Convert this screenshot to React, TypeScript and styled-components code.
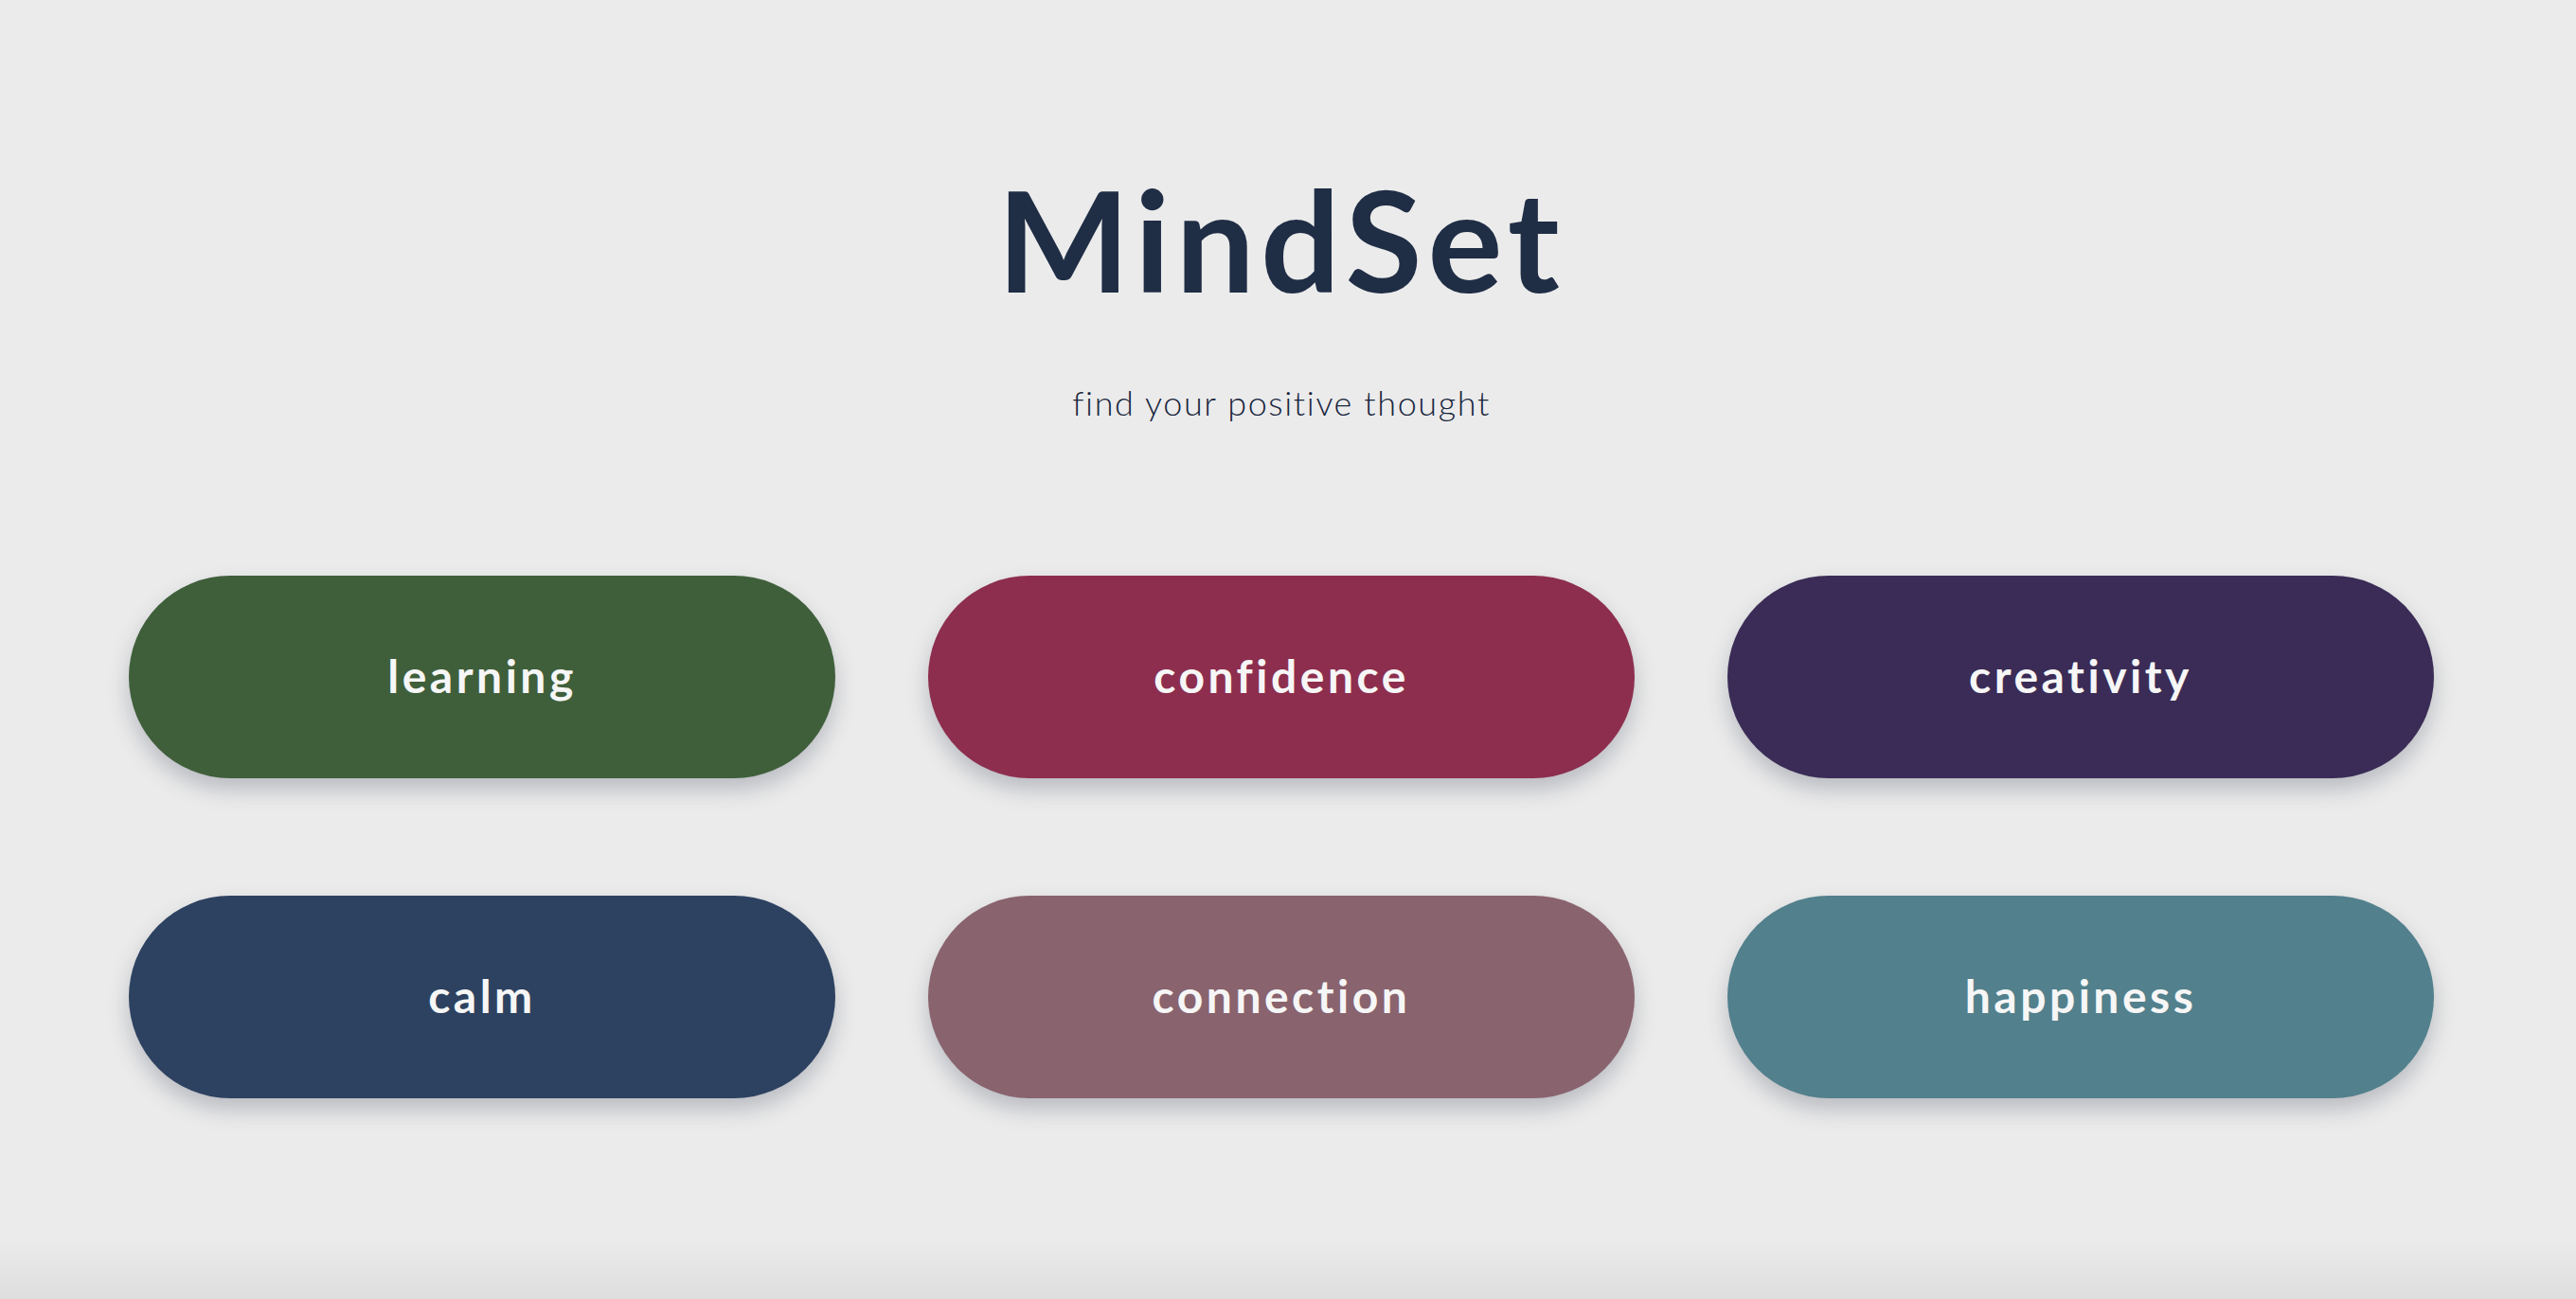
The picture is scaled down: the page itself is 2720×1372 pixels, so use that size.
import React from "react";
import styled, { createGlobalStyle } from "styled-components";

const GlobalStyle = createGlobalStyle`
  html, body {
    margin: 0;
    padding: 0;
  }
  body {
    min-height: 100vh;
    background: linear-gradient(to bottom, #ebebeb 0, #ebebeb 1310px, #dedede 1372px);
    font-family: Lato, "Open Sans", sans-serif;
  }
`;

const Page = styled.main`
  box-sizing: border-box;
  min-height: 100vh;
  padding: 0 14px 0 0;
  display: flex;
  flex-direction: column;
  align-items: center;
`;

const Header = styled.header`
  display: flex;
  flex-direction: column;
  align-items: center;
  padding-top: 178px;
`;

const Title = styled.h1`
  margin: 0;
  font-family: Lato, sans-serif;
  font-weight: 700;
  font-size: 148px;
  line-height: 1;
  color: #1f2d45;
  letter-spacing: 6px;
`;

const Subtitle = styled.p`
  margin: 81px 0 0;
  font-family: Lato, sans-serif;
  font-weight: 300;
  font-size: 36px;
  line-height: 1;
  color: #18253c;
  letter-spacing: 1.6px;
`;

const Grid = styled.section`
  margin-top: 165px;
  display: grid;
  grid-template-columns: repeat(3, 746px);
  column-gap: 98px;
  row-gap: 124px;
`;

const Pill = styled.button<{ $bg: string }>`
  height: 214px;
  border: none;
  border-radius: 107px;
  background: ${(p) => p.$bg};
  color: #f6f6f6;
  font-family: Lato, sans-serif;
  font-weight: 700;
  font-size: 48px;
  letter-spacing: 3.5px;
  box-shadow: 0 12px 22px rgba(60, 70, 90, 0.28);
  cursor: pointer;
  display: flex;
  align-items: center;
  justify-content: center;
  padding: 0 0 4px;
`;

const moods = [
  { label: "learning", bg: "#3f5f3b" },
  { label: "confidence", bg: "#8d2e4e" },
  { label: "creativity", bg: "#3a2c56" },
  { label: "calm", bg: "#2d4260" },
  { label: "connection", bg: "#89636e" },
  { label: "happiness", bg: "#52808c" },
];

export default function App() {
  return (
    <>
      <GlobalStyle />
      <Page>
        <Header>
          <Title>MindSet</Title>
          <Subtitle>find your positive thought</Subtitle>
        </Header>
        <Grid>
          {moods.map((m) => (
            <Pill key={m.label} $bg={m.bg}>
              {m.label}
            </Pill>
          ))}
        </Grid>
      </Page>
    </>
  );
}
